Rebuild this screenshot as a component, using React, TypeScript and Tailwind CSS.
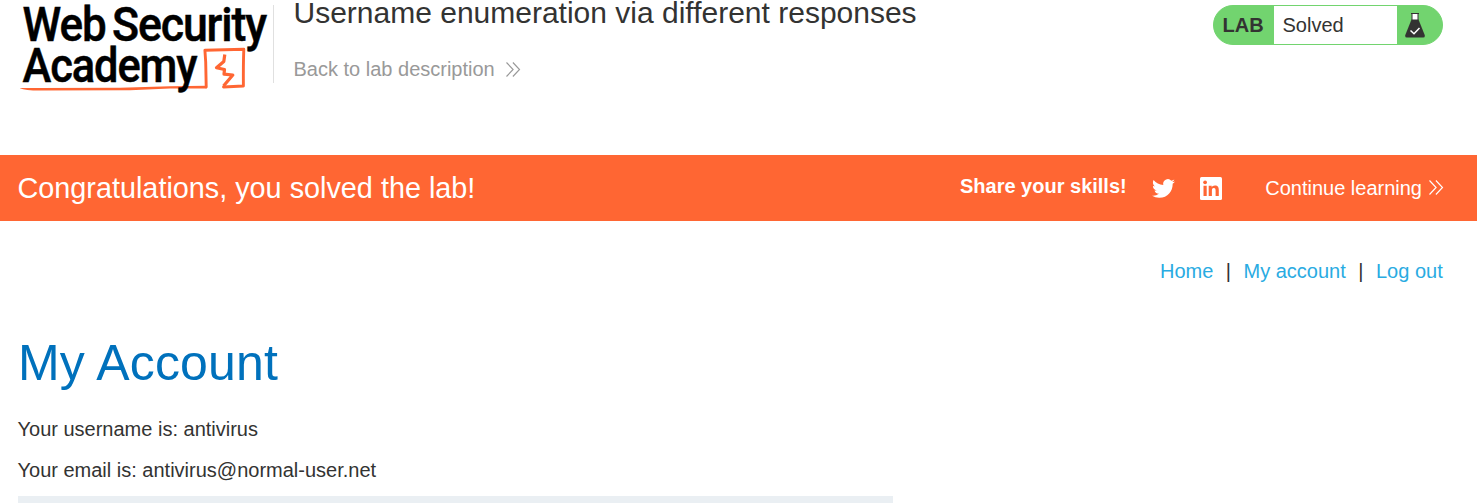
import type { ReactNode } from "react";

function Chevrons() {
  return (
    <svg viewBox="0 0 15 16" className="h-4 w-[15px]" fill="none" stroke="currentColor" strokeWidth="1.150">
      <path d="M0.500 0.500l6.600 7L0.500 14.500M6.900 0.500L13.500 7.500l-6.600 7" />
    </svg>
  );
}

function AcademyLogo() {
  return (
    <svg viewBox="0 0 254 100" className="h-[100px] w-[254px] shrink-0" aria-label="Web Security Academy">
      <path
        d="M-0.500 88L20 87.900L100 87.700L150 86.200L186.500 85.800L186.500 88.500L150 88.600L110 90.300L20 90.600Q4 90.400 -0.500 88Z"
        fill="#ff6633"
      />
      <path
        d="M186.200 87L185.700 62L184.900 50.200L223.800 49.300Q223.200 65 223.400 86L203.500 87"
        fill="none"
        stroke="#ff6633"
        strokeWidth="2.900"
        strokeLinejoin="round"
        strokeLinecap="round"
      />
      <path
        d="M204.800 54.500L203.800 61.500L196.500 67.800L204.500 69.500L204 74.200L212.800 75L203.500 86"
        fill="none"
        stroke="#ff6633"
        strokeWidth="3.200"
        strokeLinejoin="round"
      />
      <g fill="#000" stroke="#000" strokeWidth="0.500" fontFamily="Roboto, sans-serif" fontWeight="500" fontSize="47.500" letterSpacing="-1.200">
        <text x="2.500" y="40.700" textLength="83" lengthAdjust="spacingAndGlyphs">Web</text>
        <text x="92" y="40.700" textLength="154" lengthAdjust="spacingAndGlyphs">Security</text>
        <text x="2.500" y="81.700" textLength="174" lengthAdjust="spacingAndGlyphs">Academy</text>
      </g>
    </svg>
  );
}

function Flask() {
  return (
    <svg viewBox="0 0 20 26" className="h-[26px] w-5">
      <path d="M7 2h6v6H7z" fill="#fff" />
      <path d="M6 1.500h8M7 2v6M13 2v6" stroke="#333332" strokeWidth="1" fill="none" />
      <path d="M6.500 7.500h7l6.200 15.500q.6 2.500-1.500 2.500H1.800q-2.100 0-1.500-2.500z" fill="#333332" />
      <path d="M5.500 18.500l3.500 3.200 5.500-5.700" stroke="#fff" strokeWidth="1.500" fill="none" />
    </svg>
  );
}

function Twitter() {
  return (
    <svg viewBox="0 0 24 24" className="h-[23px] w-[23px]" fill="#fff">
      <path d="M23.953 4.570a10 10 0 01-2.825.775 4.958 4.958 0 002.163-2.723c-.951.555-2.005.959-3.127 1.184a4.920 4.920 0 00-8.384 4.482C7.690 8.095 4.067 6.130 1.640 3.162a4.822 4.822 0 00-.666 2.475c0 1.710.870 3.213 2.188 4.096a4.904 4.904 0 01-2.228-.616v.060a4.923 4.923 0 003.946 4.827 4.996 4.996 0 01-2.212.085 4.936 4.936 0 004.604 3.417 9.867 9.867 0 01-6.102 2.105c-.390 0-.779-.023-1.170-.067a13.995 13.995 0 007.557 2.209c9.053 0 13.998-7.496 13.998-13.985 0-.210 0-.420-.015-.630A9.935 9.935 0 0024 4.590z" />
    </svg>
  );
}

function LinkedIn() {
  return (
    <svg viewBox="0 0 22 23" className="h-[23px] w-[22px]">
      <rect width="22" height="23" rx="1.500" fill="#fff" />
      <g fill="#ff6633">
        <circle cx="5.100" cy="5.300" r="1.900" />
        <path d="M3.500 8.700h3.200V19H3.500zM8.700 8.700h3v1.500c.5-1 1.600-1.800 3.200-1.800 3.100 0 3.900 2 3.900 4.800V19h-3.200v-5.200c0-1.400-.2-2.700-1.800-2.700s-1.900 1.300-1.900 2.700V19H8.700z" />
      </g>
    </svg>
  );
}

function NavLink({ children }: { children: ReactNode }) {
  return <a href="#" className="text-[#29abe2]">{children}</a>;
}

export default function App() {
  return (
    <div className="h-[503px] overflow-hidden bg-white font-['Liberation_Sans',sans-serif] text-[20px] leading-[23px] text-[#333332]">
      <header className="flex h-[155px] items-start pr-[34px] pl-5">
        <AcademyLogo />
        <div className="mt-[5px] -ml-px h-[78px] border-l border-[#e0e0e0] pl-[19.500px]">
          <h2 className="-mt-[9px] text-[30px] leading-[34px] whitespace-nowrap">Username enumeration via different responses</h2>
          <a href="#" className="mt-7 flex items-center gap-[11px] text-[#999]">
            Back to lab description
            <Chevrons />
          </a>
        </div>
        <div className="mt-[5px] ml-auto flex h-10 w-[230px] overflow-hidden rounded-[20px] border border-[#72d46f] bg-[#72d46f]">
          <span className="flex w-[60px] items-center pt-px pl-[8.500px] font-bold">LAB</span>
          <span className="flex w-[123px] items-center bg-white pl-[8.500px]">Solved</span>
          <span className="flex items-center pl-2"><Flask /></span>
        </div>
      </header>
      <section className="flex h-[66px] items-center bg-[#ff6633] pr-[33px] pl-[17.500px] text-white">
        <h4 className="pb-px text-[28.800px] leading-8">Congratulations, you solved the lab!</h4>
        <span className="mr-[25px] mb-1 ml-auto font-bold">Share your skills!</span>
        <Twitter />
        <span className="ml-[25px]"><LinkedIn /></span>
        <a href="#" className="ml-[43.500px] flex items-center gap-[6.500px]">
          Continue learning
          <span className="mr-[0.500px]"><Chevrons /></span>
        </a>
      </section>
      <nav className="mt-[39px] flex justify-end gap-[12.500px] pr-[34.300px]">
        <NavLink>Home</NavLink><span>|</span><NavLink>My account</NavLink><span>|</span><NavLink>Log out</NavLink>
      </nav>
      <main className="pl-[18px]">
        <h1 className="mt-[51px] text-[50px] leading-[58px] tracking-[0.150px] text-[#0071bc]">My Account</h1>
        <p className="mt-[26px] -ml-[0.500px]">Your username is: antivirus</p>
        <p className="mt-[18px] -ml-[0.500px]">Your email is: antivirus@normal-user.net</p>
        <div className="mt-[14px] h-5 w-[875px] bg-[#eaeff3]" />
      </main>
    </div>
  );
}
